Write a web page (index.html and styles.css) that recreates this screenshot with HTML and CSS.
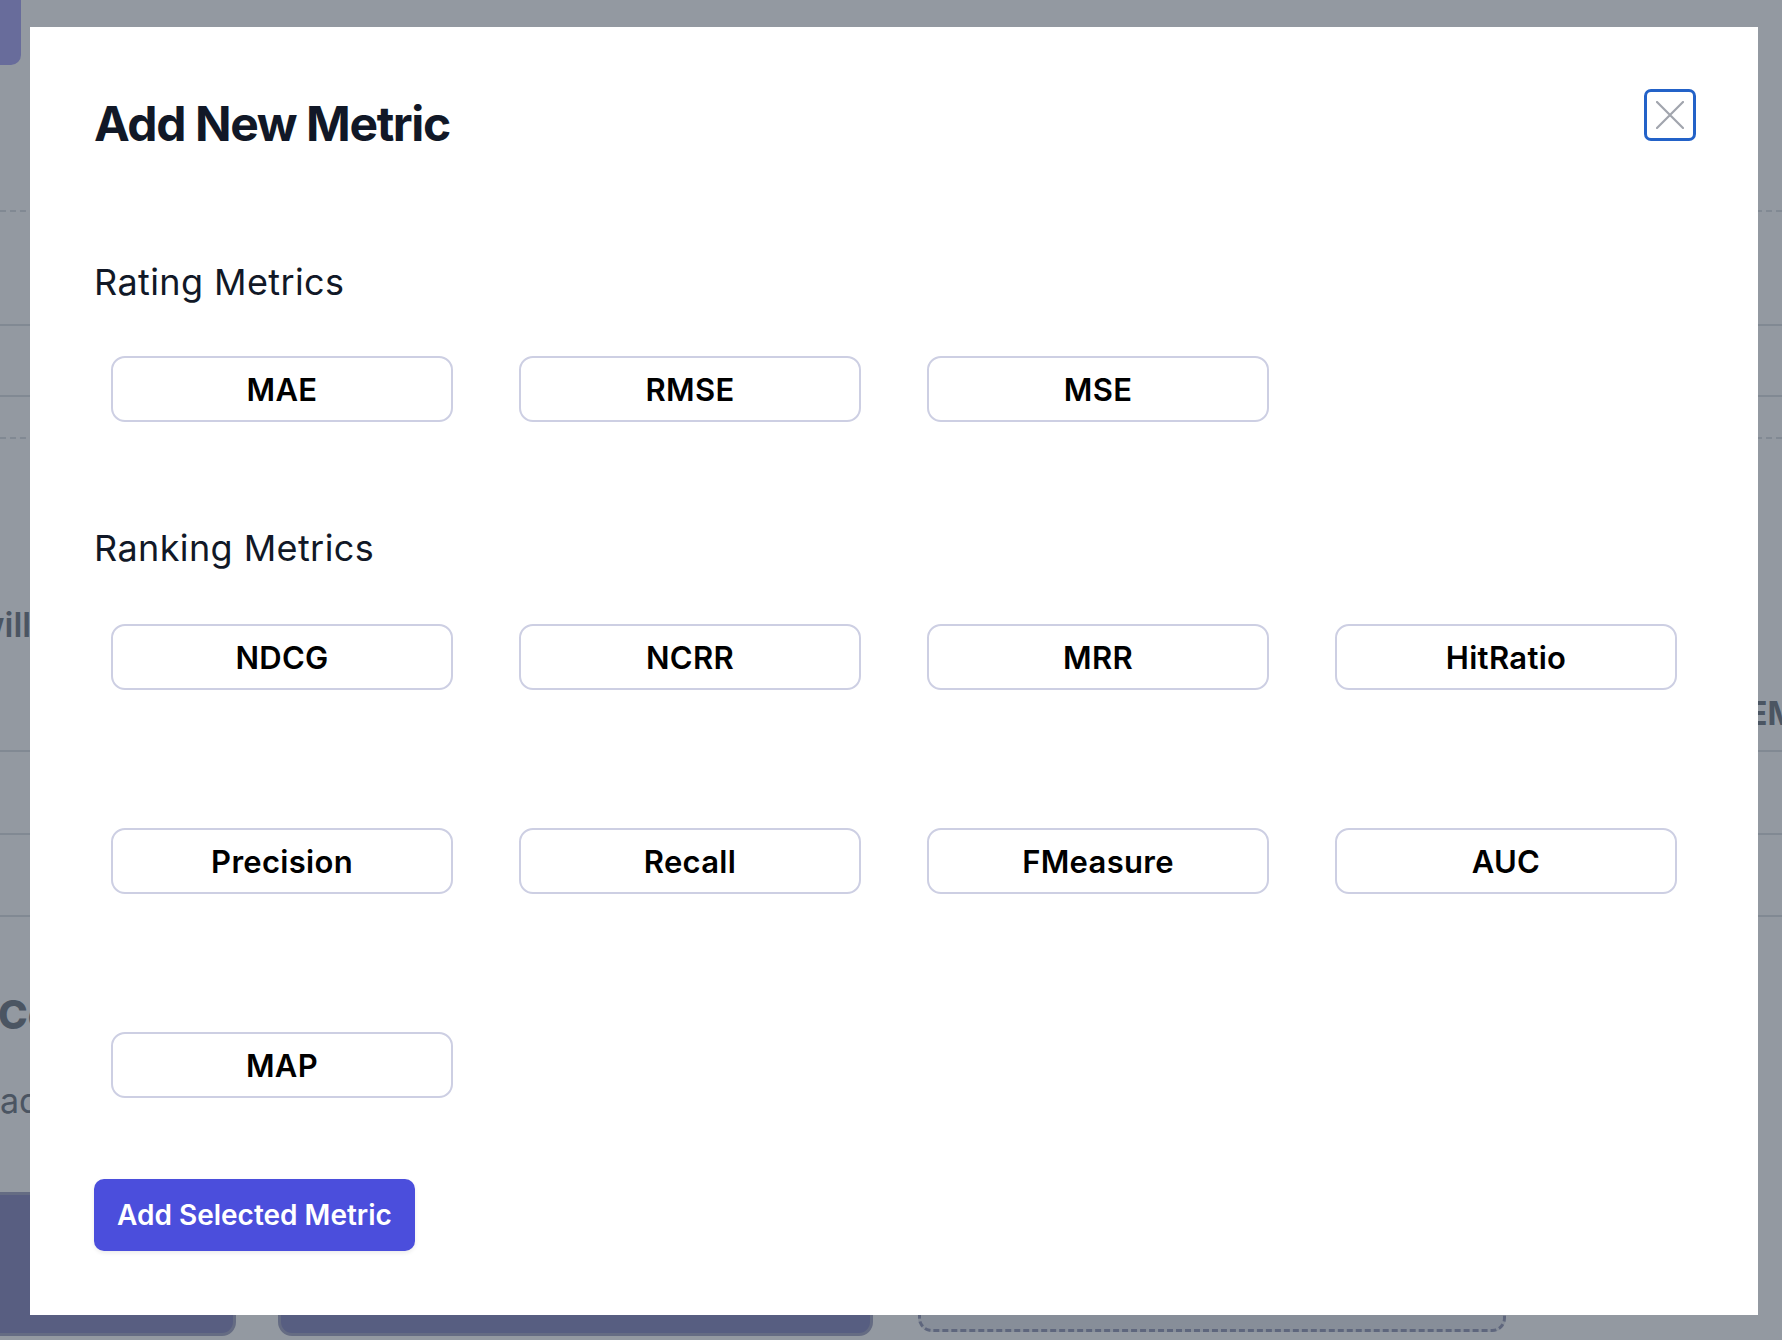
FILE: index.html
```html
<!DOCTYPE html>
<html lang="en">
<head>
<meta charset="utf-8">
<title>Add New Metric</title>
<link rel="stylesheet" href="styles.css">
</head>
<body>
<div class="page">
  <div class="page-tab"></div>
  <div class="page-rule rule-a dashed"></div>
  <div class="page-rule rule-b"></div>
  <div class="page-rule rule-c"></div>
  <div class="page-rule rule-d dashed"></div>
  <div class="page-rule rule-e"></div>
  <div class="page-rule rule-f"></div>
  <div class="page-rule rule-g"></div>
  <div class="page-text text-will">will</div>
  <div class="page-text text-em">EM</div>
  <div class="page-text text-co">Co</div>
  <div class="page-text text-ad">ad</div>
  <div class="page-btn btn-left"></div>
  <div class="page-btn btn-mid"></div>
  <div class="page-btn btn-dashed"></div>
</div>
<div class="overlay"></div>
<div class="modal" role="dialog" aria-labelledby="modal-title">
  <div class="modal-header">
    <h2 class="modal-title" id="modal-title">Add New Metric</h2>
    <button class="close-btn" aria-label="Close">
      <svg width="28" height="28" viewBox="0 0 28 28" aria-hidden="true">
        <path d="M1 1 L27 27 M27 1 L1 27" stroke="#a1a5ad" stroke-width="2.2" stroke-linecap="round" fill="none"/>
      </svg>
    </button>
  </div>
  <section class="group group-rating">
    <h3 class="group-title">Rating Metrics</h3>
    <div class="metric-grid">
      <button class="metric">MAE</button>
      <button class="metric">RMSE</button>
      <button class="metric">MSE</button>
    </div>
  </section>
  <section class="group group-ranking">
    <h3 class="group-title">Ranking Metrics</h3>
    <div class="metric-grid">
      <button class="metric">NDCG</button>
      <button class="metric">NCRR</button>
      <button class="metric">MRR</button>
      <button class="metric">HitRatio</button>
      <button class="metric">Precision</button>
      <button class="metric">Recall</button>
      <button class="metric">FMeasure</button>
      <button class="metric">AUC</button>
      <button class="metric">MAP</button>
    </div>
  </section>
  <button class="submit">Add Selected Metric</button>
</div>
</body>
</html>
```
FILE: styles.css
```css
* { box-sizing: border-box; }

html, body {
  margin: 0;
  width: 1782px;
  height: 1340px;
  overflow: hidden;
}

body {
  font-family: Inter, "Noto Sans", "Liberation Sans", sans-serif;
  background: #ffffff;
  color: #111827;
}

/* ---------- page behind the dialog ---------- */
.page {
  position: relative;
  width: 1782px;
  height: 1340px;
  background: #ffffff;
}

.page-tab {
  position: absolute;
  left: -10px;
  top: -10px;
  width: 31px;
  height: 75px;
  border-radius: 10px;
  background: #938ef0;
}

.page-rule {
  position: absolute;
  left: 0;
  right: 0;
  height: 0;
  border-top: 2px solid #d3d6dd;
}
.page-rule.dashed { border-top-style: dashed; }
.rule-a { top: 210px; }
.rule-b { top: 324px; }
.rule-c { top: 395px; }
.rule-d { top: 437px; }
.rule-e { top: 750px; }
.rule-f { top: 833px; }
.rule-g { top: 915px; }

.page-text {
  position: absolute;
  color: #4b5563;
  white-space: nowrap;
}
.text-will { left: -24px; top: 604px; font-size: 34px; font-weight: 600; }
.text-em   { left: 1748px; top: 694px; font-size: 32px; font-weight: 700; }
.text-co   { left: -2px; top: 990px; font-size: 40px; font-weight: 800; }
.text-ad   { left: 0; top: 1080px; font-size: 34px; font-weight: 400; }

.page-btn {
  position: absolute;
  border-radius: 14px;
}
.btn-left {
  left: -20px;
  top: 1192px;
  width: 256px;
  height: 144px;
  background: #6d6db0;
  border: 3px solid #8d8fb4;
}
.btn-mid {
  left: 278px;
  top: 1190px;
  width: 595px;
  height: 146px;
  background: #6a6cae;
  border: 3px solid #8d8fb4;
}
.btn-dashed {
  left: 918px;
  top: 1190px;
  width: 588px;
  height: 142px;
  background: #e2e4ea;
  border: 3px dashed #7c80a6;
}

.overlay {
  position: fixed;
  inset: 0;
  background: rgba(75, 85, 99, 0.6);
}

/* ---------- dialog ---------- */
.modal {
  position: fixed;
  left: 30px;
  top: 27px;
  width: 1728px;
  height: 1288px;
  background: #ffffff;
  padding: 62px 64px 0 64px;
}

.modal-header {
  display: flex;
  justify-content: space-between;
  align-items: flex-start;
}

.modal-title {
  margin: 11px 0 0;
  font-size: 48px;
  line-height: 48px;
  font-weight: 700;
  color: #111827;
  letter-spacing: -1.4px;
}

.close-btn {
  width: 52px;
  height: 52px;
  margin-right: -2px;
  padding: 0;
  border: 3px solid #2362c8;
  border-radius: 7px;
  background: #ffffff;
  display: flex;
  align-items: center;
  justify-content: center;
  cursor: pointer;
}

.group-title {
  margin: 0;
  font-size: 36px;
  line-height: 40px;
  font-weight: 400;
  color: #111827;
  letter-spacing: 0.4px;
}
.group-rating .group-title { margin-top: 114px; }
.group-ranking .group-title { margin-top: 106px; }

.metric-grid {
  display: grid;
  grid-template-columns: repeat(4, 342px);
  column-gap: 66px;
  row-gap: 138px;
  padding-left: 17px;
  margin-top: 54px;
}
.group-ranking .metric-grid { margin-top: 56px; }

.metric {
  height: 66px;
  padding: 0;
  border: 2px solid #cdcfe3;
  border-radius: 14px;
  background: #ffffff;
  color: #000000;
  font-family: Inter, "Noto Sans", sans-serif;
  font-size: 31px;
  font-weight: 600;
  letter-spacing: 0.3px;
  cursor: pointer;
}

.submit {
  display: block;
  margin-top: 81px;
  height: 72px;
  padding: 0 23px;
  border: none;
  border-radius: 10px;
  background: #4b4edc;
  color: #ffffff;
  font-family: Inter, "Noto Sans", sans-serif;
  font-size: 28px;
  font-weight: 600;
  box-shadow: 0 2px 4px rgba(0, 0, 0, 0.08);
  cursor: pointer;
}
```
